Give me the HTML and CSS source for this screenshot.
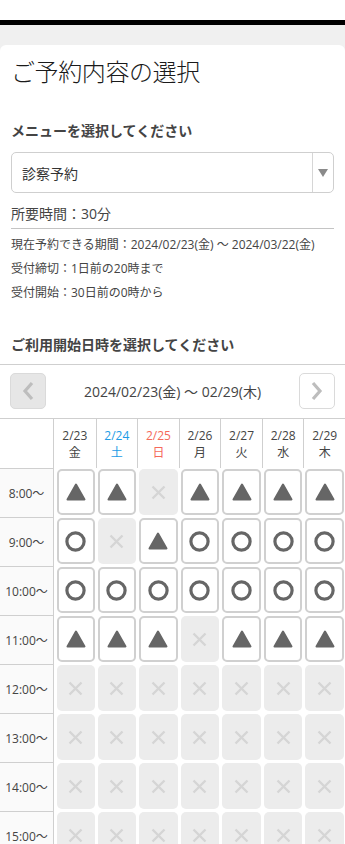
FILE: index.html
```html
<!DOCTYPE html>
<html lang="ja">
<head>
<meta charset="utf-8">
<title>ご予約内容の選択</title>
<link rel="stylesheet" href="styles.css">
</head>
<body>
<div class="topbar"></div>
<div class="card">
  <div class="inner">
    <h1 class="title">ご予約内容の選択</h1>
    <h2 class="label label-menu">メニューを選択してください</h2>
    <div class="select">
      <span class="select-text">診察予約</span>
      <span class="select-arrow"><svg width="10" height="8" viewBox="0 0 10 8"><polygon points="0,0 10,0 5,8" fill="#8a8a8a"/></svg></span>
    </div>
    <div class="duration">所要時間：30分</div>
    <div class="info">
      <div>現在予約できる期間：2024/02/23(金) 〜 2024/03/22(金)</div>
      <div>受付締切：1日前の20時まで</div>
      <div>受付開始：30日前の0時から</div>
    </div>
  </div>
  <div class="calendar">
    <h2 class="label label-date">ご利用開始日時を選択してください</h2>
    <div class="nav">
      <button class="nav-btn prev"><svg width="12" height="20" viewBox="0 0 12 20"><polyline points="10,2 3,10 10,18" fill="none" stroke="#bdbdbd" stroke-width="3.2" stroke-linejoin="miter"/></svg></button>
      <div class="nav-title">2024/02/23(金) 〜 02/29(木)</div>
      <button class="nav-btn next"><svg width="12" height="20" viewBox="0 0 12 20"><polyline points="2,2 9,10 2,18" fill="none" stroke="#bdbdbd" stroke-width="3.2" stroke-linejoin="miter"/></svg></button>
    </div>
    <div class="grid head">
      <div class="hcell corner"></div>
      <div class="hcell"><span>2/23</span><span>金</span></div>
      <div class="hcell sat"><span>2/24</span><span>土</span></div>
      <div class="hcell sun"><span>2/25</span><span>日</span></div>
      <div class="hcell"><span>2/26</span><span>月</span></div>
      <div class="hcell"><span>2/27</span><span>火</span></div>
      <div class="hcell"><span>2/28</span><span>水</span></div>
      <div class="hcell"><span>2/29</span><span>木</span></div>
    </div>
    <div class="grid body" id="body"></div>
  </div>
</div>
<script>
(function(){
  var rows = [
    ["8:00〜","TTXTTTT"],
    ["9:00〜","OXTOOOO"],
    ["10:00〜","OOOOOOO"],
    ["11:00〜","TTTXTTT"],
    ["12:00〜","XXXXXXX"],
    ["13:00〜","XXXXXXX"],
    ["14:00〜","XXXXXXX"],
    ["15:00〜","XXXXXXX"]
  ];
  var tri = '<svg width="20" height="18" viewBox="0 0 20 18"><polygon points="10,1.5 18.5,16.5 1.5,16.5" fill="#666" stroke="#666" stroke-width="2" stroke-linejoin="round"/></svg>';
  var cir = '<svg width="21" height="21" viewBox="0 0 21 21"><circle cx="10.5" cy="10.5" r="8.6" fill="none" stroke="#666" stroke-width="3.2"/></svg>';
  var crs = '<svg width="15" height="15" viewBox="0 0 15 15"><path d="M1.5 1.5 L13.5 13.5 M13.5 1.5 L1.5 13.5" stroke="#d5d5d5" stroke-width="2.4" fill="none"/></svg>';
  var html = '';
  rows.forEach(function(r){
    html += '<div class="time">' + r[0] + '</div>';
    for (var i = 0; i < 7; i++) {
      var c = r[1][i];
      if (c === 'X') html += '<div class="slot"><div class="mark off">' + crs + '</div></div>';
      else html += '<div class="slot"><button class="mark on">' + (c === 'T' ? tri : cir) + '</button></div>';
    }
  });
  document.getElementById('body').innerHTML = html;
})();
</script>
</body>
</html>
```
FILE: styles.css
```css
* { box-sizing: border-box; }
html, body { margin: 0; padding: 0; }
body {
  background: #f0f0f0;
  font-family: "Open Sans", "Noto Sans CJK JP", sans-serif;
  color: #444;
  width: 345px;
  overflow-x: hidden;
}
.topbar {
  height: 45px;
  background: #f0f0f0;
  border-top: 20px solid #fff;
}
.topbar::before {
  content: "";
  display: block;
  height: 5px;
  background: #000;
}
.card {
  background: #fff;
  border-radius: 6px 6px 0 0;
  padding-top: 11px;
}
.inner { padding: 0 11px; }
.title {
  margin: 0;
  font-size: 24px;
  line-height: 30px;
  font-weight: 300;
  color: #1a1a1a;
  font-family: "Noto Sans CJK JP", sans-serif;
  letter-spacing: -0.4px;
}
.label {
  margin: 0;
  font-size: 14px;
  line-height: 20px;
  font-weight: 700;
  color: #444;
}
.label-menu { margin-top: 35px; }
.select {
  margin-top: 11px;
  height: 41px;
  border: 1px solid #cfcfcf;
  border-radius: 5px;
  display: flex;
  align-items: center;
}
.select-text {
  flex: 1;
  padding-left: 10px;
  font-size: 14px;
  color: #333;
}
.select-arrow {
  width: 21px;
  height: 100%;
  border-left: 1px solid #d6d6d6;
  display: flex;
  align-items: center;
  justify-content: center;
  padding-top: 1px;
}
.duration {
  margin-top: 11px;
  font-size: 14px;
  line-height: 20px;
  padding-bottom: 4px;
  border-bottom: 1px solid #c4c4c4;
}
.info {
  margin-top: 4px;
  font-size: 12px;
  line-height: 24px;
}
.label-date {
  margin-top: 30px;
  padding: 0 11px 9px;
  border-bottom: 1px solid #cfcfcf;
}
.nav {
  margin-top: 8px;
  padding: 0 10px;
  display: flex;
  align-items: center;
  justify-content: space-between;
}
.nav-btn {
  width: 36px;
  height: 36px;
  border: 1px solid #dadada;
  border-radius: 5px;
  background: #fff;
  padding: 0;
  display: flex;
  align-items: center;
  justify-content: center;
}
.nav-btn.prev { background: #e6e6e6; }
.nav-title {
  font-size: 14px;
  color: #444;
}
.grid {
  display: grid;
  grid-template-columns: 54px repeat(7, 1fr);
}
.head {
  margin-top: 9px;
  border-top: 1px solid #cfcfcf;
}
.hcell {
  display: flex;
  flex-direction: column;
  align-items: center;
  padding: 8px 0 7px;
  font-size: 12px;
  line-height: 17px;
  color: #444;
  border-left: 1px solid #cfcfcf;
}
.hcell.corner { border-left: none; border-right: 1px solid #cfcfcf; }
.hcell.corner + .hcell { border-left: none; }
.hcell.sat { color: #1d9ce6; }
.hcell.sun { color: #f5695a; }
.body { grid-auto-rows: 49px; }
.time {
  display: flex;
  align-items: center;
  justify-content: center;
  font-size: 12px;
  color: #444;
  background: #fafafa;
  border-top: 1px solid #cfcfcf;
  border-right: 1px solid #cfcfcf;
}
.slot {
  padding: 1px 1px 2px 2px;
  display: flex;
}
.slot:nth-child(8n+2) { padding-left: 3px; }
.mark {
  flex: 1;
  border-radius: 5px;
  display: flex;
  align-items: center;
  justify-content: center;
  padding: 0;
  margin: 0;
}
.mark.on {
  background: #fff;
  border: 2px solid #d0d0d0;
}
.mark.off {
  background: #ececec;
}
```
